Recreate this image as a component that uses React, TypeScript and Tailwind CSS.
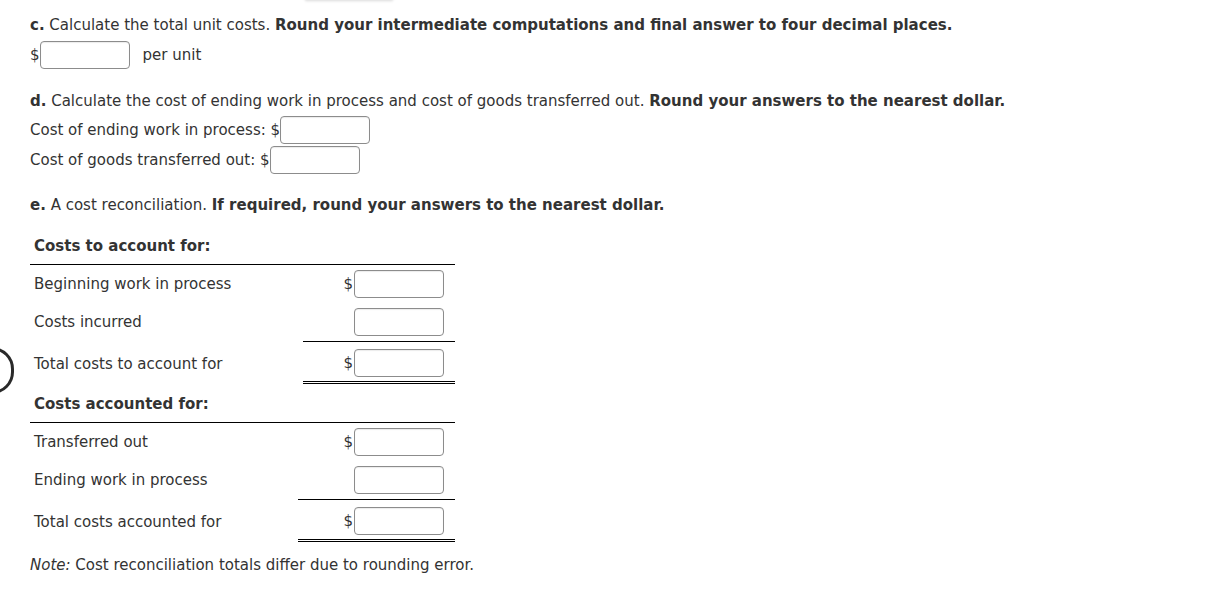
import type { ReactNode } from 'react'

const font = { fontFamily: '"DejaVu Sans", Verdana, sans-serif' }

function Box({ w = 'w-[90px]' }: { w?: string }) {
  return (
    <input
      type="text"
      className={`${w} h-[28px] rounded-[4px] border border-[#8c8c8c] bg-white shadow-[inset_0_1px_1px_rgba(0,0,0,0.08)] outline-none`}
    />
  )
}

function Row({
  label,
  dollar,
  rule,
  valueW,
}: {
  label: string
  dollar?: boolean
  rule?: 'single' | 'double'
  valueW: string
}) {
  const h = rule === 'double' ? 'h-[42px] pt-[3px]' : rule === 'single' ? 'h-[39px]' : 'h-[38px]'
  return (
    <div className={`flex items-center ${h}`}>
      <div className="flex-1 pl-1">{label}</div>
      <div
        className={`${valueW} flex h-full items-center justify-end pr-[11px] ${
          rule === 'single' ? 'border-b border-black' : ''
        } ${rule === 'double' ? 'border-b-[3px] border-double border-black' : ''}`}
      >
        {dollar && <span className="mr-px">$</span>}
        <Box />
      </div>
    </div>
  )
}

function Section({ title, children }: { title: string; children: ReactNode }) {
  return (
    <div>
      <div className="flex h-[39px] items-center border-b border-black pl-1 pt-[2px] font-bold">
        {title}
      </div>
      {children}
    </div>
  )
}

export default function App() {
  return (
    <div className="relative min-h-[595px] w-[1205px] bg-white text-[15px] text-[#333]" style={font}>
      {/* bits of the page above and beside */}
      <div className="absolute left-[305px] top-[-6px] h-[6px] w-[88px] shadow-[0_1px_3px_rgba(0,0,0,0.15)]" />
      <div className="absolute left-[-30px] top-[347px] h-[47px] w-[44px] rounded-full border-[3px] border-[#2a2a2a]" />

      <div className="pl-[30px] pt-[15px]">
        <p className="leading-[20px]">
          <b>c.</b> Calculate the total unit costs.{' '}
          <b>Round your intermediate computations and final answer to four decimal places.</b>
        </p>
        <div className="mt-[6px] flex items-center">
          <span>$</span>
          <Box />
          <span className="ml-[13px]">per unit</span>
        </div>

        <p className="mt-[22px] leading-[20px]">
          <b>d.</b> Calculate the cost of ending work in process and cost of goods transferred out.{' '}
          <b>Round your answers to the nearest dollar.</b>
        </p>
        <div className="mt-[5px] flex h-[28px] items-center">
          <span>Cost of ending work in process: $</span>
          <Box />
        </div>
        <div className="mt-[2px] flex h-[28px] items-center">
          <span>Cost of goods transferred out: $</span>
          <Box />
        </div>

        <p className="mt-[21px] leading-[20px]">
          <b>e.</b> A cost reconciliation. <b>If required, round your answers to the nearest dollar.</b>
        </p>

        <div className="mt-[11px] w-[425px]">
          <Section title="Costs to account for:">
            <Row label="Beginning work in process" dollar valueW="w-[152px]" />
            <Row label="Costs incurred" rule="single" valueW="w-[152px]" />
            <Row label="Total costs to account for" dollar rule="double" valueW="w-[152px]" />
          </Section>
          <Section title="Costs accounted for:">
            <Row label="Transferred out" dollar valueW="w-[157px]" />
            <Row label="Ending work in process" rule="single" valueW="w-[157px]" />
            <Row label="Total costs accounted for" dollar rule="double" valueW="w-[157px]" />
          </Section>
        </div>

        <p className="mt-[13px] leading-[20px]">
          <i>Note:</i> Cost reconciliation totals differ due to rounding error.
        </p>
      </div>
    </div>
  )
}
